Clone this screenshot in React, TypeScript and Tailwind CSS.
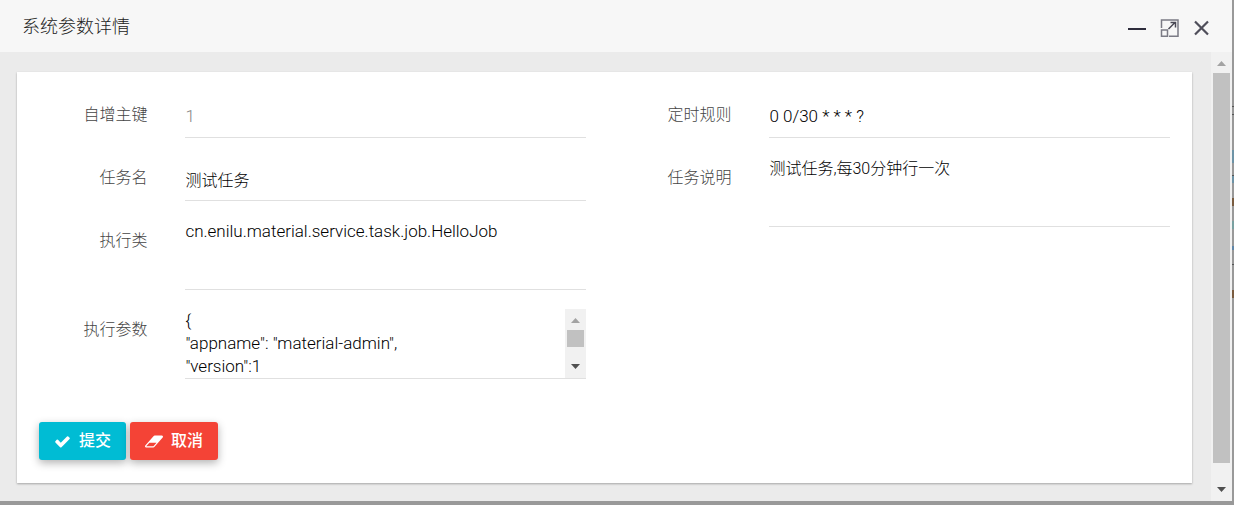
import React, { useId } from 'react';

const controlClass =
  'block w-full min-w-0 resize-none appearance-none overflow-hidden rounded-none bg-transparent p-0 text-black outline-none disabled:text-[#8a8a8a]';

type FieldProps = {
  label: string;
  value: string;
  multiline?: boolean;
  disabled?: boolean;
  scrollbar?: boolean;
  latin?: boolean;
};

function Field({ label, value, multiline, disabled, scrollbar, latin }: FieldProps) {
  const id = useId();
  const size = latin ? 'text-[17px]' : 'text-[16px]';
  return (
    <div className="flex items-start gap-[37px]">
      <label htmlFor={id} className="w-1/5 shrink-0 pr-px text-right leading-[42px] text-[#444]">
        {label}
      </label>
      <div className="flex min-w-0 flex-1 border-b border-[#e0e0e0]">
        {multiline ? (
          <textarea id={id} rows={3} defaultValue={value} className={`${controlClass} ${size} leading-[23px]`} />
        ) : (
          <input
            id={id}
            type="text"
            defaultValue={value}
            disabled={disabled}
            className={`${controlClass} ${size} h-[43px]`}
          />
        )}
        {scrollbar && (
          <div aria-hidden="true" className="flex w-[21px] shrink-0 flex-col items-center bg-[#f1f1f1]">
            <ScrollArrow className="text-[#a3a3a3]" />
            <div className="h-[17px] w-[17px] bg-[#c1c1c1]" />
            <ScrollArrow className="mt-auto rotate-180 text-[#505050]" />
          </div>
        )}
      </div>
    </div>
  );
}

function ScrollArrow({ className }: { className: string }) {
  return (
    <svg viewBox="0 0 21 21" fill="currentColor" className={`h-[21px] w-[21px] shrink-0 ${className}`}>
      <path d="M6 14 L10.500 9 L15 14 Z" />
    </svg>
  );
}

export default function App() {
  return (
    <div className="flex min-h-screen flex-col bg-[linear-gradient(#999_106px,#555_106px_107px,#999_107px_114px,#555_114px_115px,#999_115px_150px,#6d93a6_150px_163px,#999_163px_175px,#555_175px_176px,#6d93a6_176px_183px,#999_183px_198px,#7a5c40_198px_206px,#999_206px_221px,#79a0a0_221px_229px,#999_229px_246px,#5f86a8_246px_250px,#999_250px_264px,#555_264px_265px,#999_265px_290px,#7a5c40_290px_298px,#999_298px)] pr-[2px] pb-1 font-['Roboto','Noto_Sans_CJK_SC',sans-serif] text-base font-light">
      <section className="flex flex-1 flex-col bg-[#ebebeb]">
        <header className="flex h-[52px] items-center justify-between bg-[#f7f7f7] px-[22px]">
          <h1 className="pt-0.5 text-lg text-[#222]">系统参数详情</h1>
          <div className="flex items-center gap-[14px] pt-1 text-[#2e2d3c]">
            <button type="button" aria-label="最小化" className="block">
              <svg viewBox="0 0 18 18" className="h-[18px] w-[18px]">
                <path d="M0 9h18v2H0z" fill="currentColor" />
              </svg>
            </button>
            <button type="button" aria-label="最大化" className="block">
              <svg viewBox="0 0 18 18" fill="none" stroke="#7b7b85" strokeWidth="1.500" className="h-[18px] w-[18px] overflow-visible">
                <path d="M1.500 9V1H18V17.200H9" />
                <path d="M1.500 11h6v6.200h-6z" />
                <path d="M8.500 10l6.500-6.500M10.500 3.500h5V8.500" stroke="#4a4955" />
              </svg>
            </button>
            <button type="button" aria-label="关闭" className="block">
              <svg viewBox="0 0 18 18" fill="none" stroke="#4f4e5a" strokeWidth="2.200" className="h-[18px] w-[18px]">
                <path d="M3 2.500l13 13M16 2.500l-13 13" />
              </svg>
            </button>
          </div>
        </header>
        <div className="flex flex-1">
          <main className="min-w-0 flex-1 pt-5 pr-[19px] pb-[18px] pl-[17px]">
            <form
              className="bg-white px-[22px] pt-[22px] pb-[23px] shadow-[0_1px_2px_rgba(0,0,0,0.3)]"
              onSubmit={(e) => e.preventDefault()}
            >
              <div className="grid grid-cols-2 items-start gap-x-[37px]">
                <div className="flex flex-col gap-[19px]">
                  <Field label="自增主键" value="1" disabled latin />
                  <Field label="任务名" value="测试任务" />
                  <Field label="执行类" value="cn.enilu.material.service.task.job.HelloJob" multiline latin />
                  <Field
                    label="执行参数"
                    value={'{\n"appname": "material-admin",\n"version":1\n}'}
                    multiline
                    scrollbar
                    latin
                  />
                </div>
                <div className="flex flex-col gap-[19px]">
                  <Field label="定时规则" value="0 0/30 * * * ?" latin />
                  <Field label="任务说明" value="测试任务,每30分钟行一次" multiline />
                </div>
              </div>
              <div className="mt-[43px] flex gap-1 font-medium text-white">
                <button
                  type="submit"
                  className="flex h-[38px] items-center gap-2 rounded-[3px] bg-[#00bcd4] px-[15px] shadow-[0_3px_8px_rgba(0,0,0,0.3)]"
                >
                  <svg viewBox="0 0 1792 1792" fill="currentColor" className="h-[17px] w-[17px]">
                    <path d="M1671 566q0 40-28 68l-724 724-136 136q-28 28-68 28t-68-28l-136-136-362-362q-28-28-28-68t28-68l136-136q28-28 68-28t68 28l294 295 656-657q28-28 68-28t68 28l136 136q28 28 28 68z" />
                  </svg>
                  提交
                </button>
                <button
                  type="button"
                  className="flex h-[38px] items-center gap-2 rounded-[3px] bg-[#f44336] px-[15px] shadow-[0_3px_8px_rgba(0,0,0,0.3)]"
                >
                  <svg viewBox="64 0 1920 1792" fill="currentColor" className="h-[17px] w-[18px]">
                    <path d="M960 1408l336-384h-768l-336 384h768zm1013-1077q15 34 9.500 71.500t-30.500 65.500l-896 1024q-38 44-96 44h-768q-38 0-69.500-20.500t-47.500-54.500q-15-34-9.500-71.500t30.500-65.500l896-1024q38-44 96-44h768q38 0 69.500 20.500t47.500 54.500z" />
                  </svg>
                  取消
                </button>
              </div>
            </form>
          </main>
          <div aria-hidden="true" className="flex w-[21px] flex-col items-center bg-[#f1f1f1]">
            <ScrollArrow className="text-[#a3a3a3]" />
            <div className="mb-[17px] w-[17px] flex-1 bg-[#c1c1c1]" />
            <ScrollArrow className="rotate-180 text-[#505050]" />
          </div>
        </div>
      </section>
    </div>
  );
}
